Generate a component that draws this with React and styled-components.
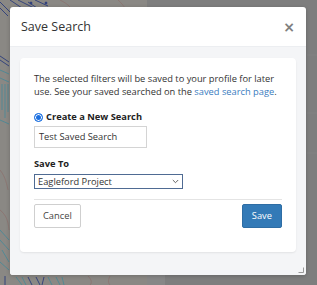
import React from "react";
import styled, { createGlobalStyle } from "styled-components";

const GlobalStyle = createGlobalStyle`
  html, body { margin: 0; padding: 0; }
  body { font-family: "Open Sans", "Noto Sans", sans-serif; color: #333; }
`;

const Page = styled.div`
  width: 317px;
  height: 285px;
  overflow: hidden;
  display: grid;
  grid-template: 1fr / 1fr;
  background: #7e7e7e;
  & > * { grid-area: 1 / 1; }
`;

const MapLayer = styled.svg`
  width: 317px;
  height: 285px;
  display: block;
`;

const Overlay = styled.div`
  padding: 7px 0 0 10px;
`;

const Modal = styled.div`
  width: 296px;
  height: 268px;
  background: #fff;
  border-radius: 3px;
  box-shadow: 0 1px 4px rgba(0, 0, 0, 0.2);
  display: flex;
  flex-direction: column;
  position: relative;
  overflow: hidden;
`;

const Header = styled.div`
  height: 40px;
  flex: none;
  display: flex;
  align-items: center;
  justify-content: space-between;
  padding: 0 11px 0 11px;
  border-bottom: 1px solid #eceef1;
  box-sizing: border-box;
`;

const Title = styled.h4`
  margin: 0;
  font-size: 12.5px;
  font-weight: 400;
  color: #333;
`;

const Close = styled.span`
  font-family: "DejaVu Sans", sans-serif;
  font-size: 14px;
  font-weight: 700;
  color: #808080;
  line-height: 1;
`;

const Body = styled.div`
  flex: 1;
  background: #f4f5f7;
  padding: 11px 10px 23px;
  display: flex;
  flex-direction: column;
`;

const Card = styled.div`
  background: #fff;
  border-radius: 4px;
  box-shadow: 0 1px 2px rgba(0, 0, 0, 0.08);
  padding: 15px 14px 24px;
  display: flex;
  flex-direction: column;
  align-items: flex-start;
`;

const Text = styled.p`
  margin: 0;
  font-size: 9.3px;
  line-height: 12.5px;
  color: #333;
`;

const Link = styled.a`
  color: #3a7cc0;
  text-decoration: none;
`;

const RadioRow = styled.label`
  margin-top: 13px;
  display: flex;
  align-items: center;
  gap: 3px;
  font-size: 9.3px;
  line-height: 12.5px;
  font-weight: 700;
  color: #222;
`;

const RadioDot = styled.span`
  width: 9px;
  height: 9px;
  box-sizing: border-box;
  border-radius: 50%;
  background: #1a6fe0;
  border: 1px solid #1a6fe0;
  box-shadow: inset 0 0 0 1px #fff;
  flex: none;
`;

const Input = styled.div`
  margin-top: 2px;
  width: 113px;
  height: 22px;
  box-sizing: border-box;
  border: 1px solid #d4d4d4;
  padding: 0 4px;
  display: flex;
  align-items: center;
  font-size: 9.3px;
  color: #333;
`;

const Label = styled.div`
  margin-top: 10.75px;
  font-size: 9.3px;
  line-height: 12.5px;
  font-weight: 700;
  color: #222;
`;

const Select = styled.div`
  margin-top: 2.75px;
  width: 149px;
  height: 15px;
  box-sizing: border-box;
  border: 1px solid #4f6b93;
  padding: 0 3px 0 3px;
  display: flex;
  align-items: center;
  justify-content: space-between;
  font-size: 9.3px;
  color: #333;
`;

const Rule = styled.hr`
  align-self: stretch;
  margin: 10px 0 0;
  border: 0;
  border-top: 1px solid #e4e4e4;
  height: 0;
`;

const Actions = styled.div`
  align-self: stretch;
  margin-top: 4px;
  display: flex;
  justify-content: space-between;
`;

const Button = styled.button`
  height: 24px;
  box-sizing: border-box;
  padding: 0 ${(p) => (p.$primary ? "9px" : "8px")};
  font-family: inherit;
  font-size: 9.3px;
  border-radius: 2px;
  border: 1px solid ${(p) => (p.$primary ? "#2e6da4" : "#cfcfcf")};
  background: ${(p) => (p.$primary ? "#337ab7" : "#fff")};
  color: ${(p) => (p.$primary ? "#fff" : "#444")};
`;

const Grip = styled.svg`
  position: absolute;
  right: 2px;
  bottom: 2px;
`;

function MapBackground() {
  return (
    <MapLayer viewBox="0 0 317 285">
      <rect x="0" y="0" width="147" height="285" fill="#8a8884" />
      <rect x="147" y="0" width="170" height="285" fill="#7e7e7e" />
      <rect x="147" y="240" width="18" height="45" fill="#878787" />
      <g stroke="#8e6a66" strokeWidth="0.6" fill="none" opacity="0.9">
        <path d="M60 0 C 70 5, 75 10, 72 20" />
        <path d="M118 0 C 125 6, 128 12, 126 20" />
        <path d="M0 170 C 4 175, 6 180, 8 190" />
        <path d="M0 210 C 6 215, 8 220, 9 230" />
        <path d="M88 276 C 92 280, 92 283, 90 285" />
        <path d="M110 276 C 108 280, 108 283, 110 285" />
      </g>
      <g stroke="#2b3c7c" strokeWidth="0.9" fill="none">
        <path d="M0 2 L 10 12" />
        <path d="M0 8 L 8 16" />
        <path d="M10 0 L 22 8" />
        <path d="M18 0 L 34 8" />
        <path d="M28 2 L 40 10" />
        <path d="M35 0 L 48 6" />
        <circle cx="31" cy="3" r="1" fill="#2b3c7c" />
        <circle cx="46" cy="3" r="1" fill="#2b3c7c" />
        <path d="M0 60 L 9 66" />
        <path d="M0 56 L 9 62" />
        <path d="M5 276 L 5 285" />
        <path d="M28 277 L 32 285" />
        <path d="M36 277 L 40 285" />
        <path d="M44 277 L 42 285" />
      </g>
      <g stroke="#3a8a9c" strokeWidth="0.7" fill="none">
        <path d="M0 70 L 9 74" />
        <path d="M0 78 L 9 82" />
        <path d="M2 84 L 2 110" />
        <path d="M5 84 L 5 118" />
        <path d="M8 84 L 8 112" />
        <path d="M0 120 L 9 124" />
        <path d="M0 230 L 9 240" />
        <path d="M0 240 L 9 250" />
        <path d="M2 250 L 9 262" />
        <path d="M0 262 L 9 270" />
        <path d="M16 277 L 22 285" />
        <path d="M22 277 L 26 285" />
        <path d="M48 277 L 52 285" />
        <path d="M56 277 L 60 285" />
        <path d="M62 277 L 64 285" />
      </g>
      <g stroke="#888" strokeWidth="0.6">
        <path d="M307 55 L 317 55" />
        <path d="M307 113 L 317 113" />
        <path d="M307 153 L 317 153" />
      </g>
    </MapLayer>
  );
}

export default function App() {
  return (
    <>
      <GlobalStyle />
      <Page>
        <MapBackground />
        <Overlay>
          <Modal>
            <Header>
              <Title>Save Search</Title>
              <Close>×</Close>
            </Header>
            <Body>
              <Card>
                <Text>
                  The selected filters will be saved to your profile for later
                  use. See your saved searched on the{" "}
                  <Link href="#">saved search page</Link>.
                </Text>
                <RadioRow>
                  <RadioDot />
                  Create a New Search
                </RadioRow>
                <Input>Test Saved Search</Input>
                <Label>Save To</Label>
                <Select>
                  <span>Eagleford Project</span>
                  <svg width="7" height="5" viewBox="0 0 7 5">
                    <path d="M0.8 1 L3.5 3.7 L6.2 1" fill="none" stroke="#555" strokeWidth="0.9" />
                  </svg>
                </Select>
                <Rule />
                <Actions>
                  <Button>Cancel</Button>
                  <Button $primary>Save</Button>
                </Actions>
              </Card>
            </Body>
            <Grip width="6" height="6" viewBox="0 0 6 6">
              <path d="M5.5 0.5 L5.5 5.5 L0.5 5.5" fill="none" stroke="#999" strokeWidth="1" />
            </Grip>
          </Modal>
        </Overlay>
      </Page>
    </>
  );
}
